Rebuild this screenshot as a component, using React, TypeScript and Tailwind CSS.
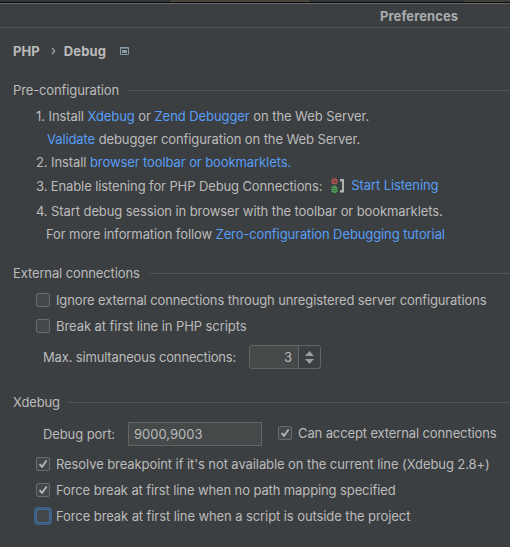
import type { ReactNode } from "react";

function Check({ checked, focused }: { checked?: boolean; focused?: boolean }) {
  return (
    <span
      className={
        "flex size-[14px] shrink-0 items-center justify-center rounded-[2px] border bg-[#43494a] " +
        (focused ? "border-[#43698e] ring-2 ring-[#3d6185]" : "border-[#6b6b6b]")
      }
    >
      {checked && (
        <svg width="12" height="12" viewBox="0 0 12 12" fill="none" className="shrink-0">
          <path d="M2.6 6.2 5 8.9 9.6 2.4" stroke="#bbbbbb" strokeWidth="1.8" />
        </svg>
      )}
    </span>
  );
}

function Section({ title, gap }: { title: ReactNode; gap: string }) {
  return (
    <div className={"flex h-5 items-center pl-[13px] " + gap}>
      <h2 className="tracking-[-0.12px]">{title}</h2>
      <div className="h-px flex-1 bg-[#515355]" />
    </div>
  );
}

function Link({ children }: { children: ReactNode }) {
  return <a className="text-[#589df6]">{children}</a>;
}

function Row({ className, children }: { className: string; children: ReactNode }) {
  return <div className={"flex items-center " + className}>{children}</div>;
}

function ListenIcon() {
  return (
    <svg width="14" height="16" viewBox="0 0 14 16" fill="none" className="shrink-0">
      <circle cx="3.5" cy="3.2" r="2.5" stroke="#c75450" strokeWidth="1.1" />
      <path d="M1.8 4.9 5.2 1.5" stroke="#c75450" strokeWidth="1.1" />
      <path d="M0 9.5h7M0 11.5h7M0 13.5h7M1.8 7.2l1 1.3M5.2 7.2l-1 1.3" stroke="#499c54" strokeWidth=".9" />
      <ellipse cx="3.5" cy="11.5" rx="2.4" ry="3.7" fill="#499c54" />
      <path d="M2.4 10.5h2.2M2.4 12.5h2.2" stroke="#3c3f41" strokeWidth=".6" />
      <path d="M9 1h4v13.5H9V12h2V3.5H9Z" fill="#afb1b3" />
    </svg>
  );
}

export default function App() {
  return (
    <div className="h-[547px] w-[510px] overflow-hidden bg-[#3c3f41] font-[Inter,sans-serif] text-[13px] leading-5 tracking-[-0.09px] whitespace-nowrap text-[#bbbbbb]">
      <div className="flex h-[2px] bg-[#323537]">
        <div className="ml-[171px] w-[138px] bg-[#4a4639]" />
        <div className="ml-[155px] flex-1 bg-[#403f3b]" />
      </div>
      <div className="h-px bg-[#0c0d0d]" />
      <header className="flex h-[25px] items-center border-t border-b border-t-[#656769] border-b-[#515355] pl-[380px] font-bold text-[#a9abac]">
        <span className="tracking-[0.08px]">Preferences</span>
      </header>

      <nav className="flex h-[45px] items-center pl-[13px] font-bold">
        <span className="tracking-[0.1px]">PHP</span>
        <svg width="5" height="8" viewBox="0 0 5 8" fill="none" className="ml-[11px]">
          <path d="M1 .8 3.6 4 1 7.2" stroke="#a9abac" strokeWidth="1.2" />
        </svg>
        <span className="ml-[8px] tracking-[0.1px]">Debug</span>
        <svg width="9" height="8" viewBox="0 0 9 8" className="ml-[14px]" fill="none">
          <path d="M.5.5h8v7h-8z" stroke="#8a9ba8" />
          <path d="M1 1h7v.6H1z" fill="#8a9ba8" />
          <path d="M2 3h5v3H2z" fill="#8a9ba8" />
        </svg>
      </nav>

      <div className="h-[7px]" />
      <Section title="Pre-configuration" gap="gap-[9px]" />
      <div className="h-[4px]" />
      <Row className="h-[23px] pl-[36px]">
        <span className="tracking-[-0.07px]">1. Install <Link>Xdebug</Link> or <Link>Zend Debugger</Link> on the Web Server.</span>
      </Row>
      <Row className="h-[23px] pl-[47px]">
        <span className="tracking-[-0.1px]"><Link>Validate</Link> debugger configuration on the Web Server.</span>
      </Row>
      <Row className="h-[23px] pl-[36px]">
        <span>2. Install <Link>browser toolbar or bookmarklets.</Link></span>
      </Row>
      <Row className="h-[25px] pl-[36px]">
        <span className="tracking-[-0.11px]">3. Enable listening for PHP Debug Connections:</span>
        <span className="ml-[9px] flex"><ListenIcon /></span>
        <span className="-mt-px ml-[6px]"><Link>Start Listening</Link></span>
      </Row>
      <Row className="h-[25px] pl-[36px]">
        <span>4. Start debug session in browser with the toolbar or bookmarklets.</span>
      </Row>
      <Row className="h-[21px] pl-[46px]">
        <span className="tracking-[-0.1px]">For more information follow <Link>Zero-configuration Debugging tutorial</Link></span>
      </Row>

      <div className="h-[19px]" />
      <Section title="External connections" gap="gap-[9px]" />
      <div className="h-[4px]" />
      <Row className="h-[26px] gap-[6px] pl-[36px]">
        <Check />
        <span className="tracking-[-0.12px]">Ignore external connections through unregistered server configurations</span>
      </Row>
      <Row className="h-[26px] gap-[6px] pl-[36px]">
        <Check />
        <span className="tracking-[-0.07px]">Break at first line in PHP scripts</span>
      </Row>
      <Row className="mt-[6px] h-6 pl-[43px]">
        <span className="w-[206px] tracking-[-0.16px]">Max. simultaneous connections:</span>
        <div className="flex h-6 w-[72px] overflow-hidden rounded-[3px] border border-[#646464]">
          <div className="flex w-[49px] items-center justify-end border-r border-[#646464] bg-[#45494a] pr-[6px]">3</div>
          <div className="flex flex-1 items-center justify-center">
            <svg width="9" height="13" viewBox="0 0 9 13" fill="#9a9da0">
              <path d="M4.5 0 9 5H0ZM0 8h9l-4.5 5Z" />
            </svg>
          </div>
        </div>
      </Row>

      <div className="h-[23px]" />
      <Section title="Xdebug" gap="gap-[8px]" />
      <div className="h-[10px]" />
      <Row className="h-6 pl-[43px]">
        <span className="w-[85px] tracking-[-0.1px]">Debug port:</span>
        <div className="flex h-6 w-[134px] items-center border border-[#646464] bg-[#45494a] pl-[5px] tracking-normal">9000,9003</div>
        <div className="-mt-[2px] ml-[16px] flex items-center gap-[6px]">
          <Check checked />
          <span className="tracking-[-0.12px]">Can accept external connections</span>
        </div>
      </Row>
      <div className="h-[5px]" />
      <Row className="h-[26px] gap-[6px] pl-[36px]">
        <Check checked />
        <span className="tracking-[-0.085px]">Resolve breakpoint if it's not available on the current line (Xdebug 2.8+)</span>
      </Row>
      <Row className="h-[26px] gap-[6px] pl-[36px]">
        <Check checked />
        <span className="tracking-[-0.11px]">Force break at first line when no path mapping specified</span>
      </Row>
      <Row className="h-[26px] gap-[6px] pl-[36px]">
        <Check focused />
        <span>Force break at first line when a script is outside the project</span>
      </Row>
    </div>
  );
}
